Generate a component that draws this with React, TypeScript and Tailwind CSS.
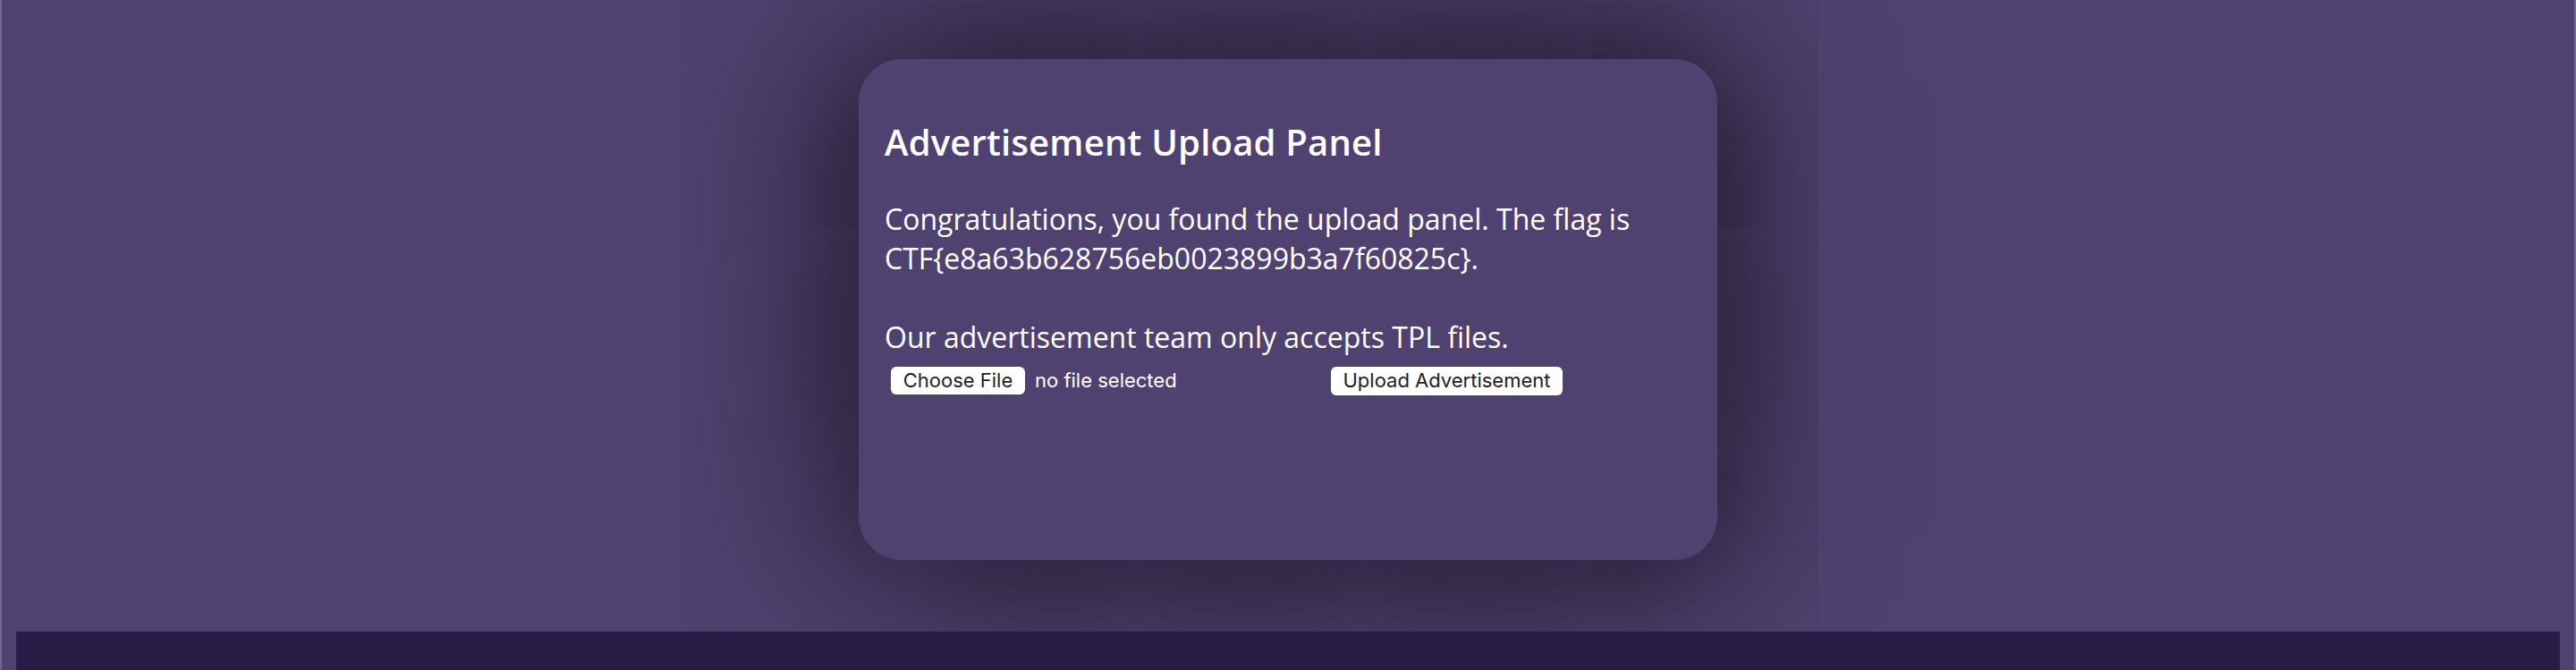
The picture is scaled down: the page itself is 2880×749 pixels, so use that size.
export default function App() {
  return (
    <div className="h-[749px] overflow-hidden bg-[#4f4270] border-x-2 border-[#70668f] flex flex-col items-center">
      <div className="mt-[66px] w-[960px] h-[560px] shrink-0 rounded-[48px] bg-[#4f4270] shadow-[0_0_210px_rgba(0,0,0,0.95)] pl-[29px] pt-[69px] text-white">
        <h2 className="font-['Open_Sans',sans-serif] text-[40px] leading-[48px] font-semibold tracking-[0.2px]">
          Advertisement Upload Panel
        </h2>
        <p className="mt-[40px] font-['Open_Sans',sans-serif] text-[32px] leading-[44px]">
          Congratulations, you found the upload panel. The flag is
          <br />
          CTF{"{"}e8a63b628756eb0023899b3a7f60825c{"}"}.
          <br />
          <br />
          Our advertisement team only accepts TPL files.
        </p>
        <form className="mt-[10px] ml-[7px] flex items-center font-['Inter',sans-serif] text-[22px]">
          <label className="h-[31px] w-[150px] flex items-center justify-center rounded-[6px] bg-white text-[#222]">
            Choose File
          </label>
          <span className="ml-[11px] w-[331px] text-white">no file selected</span>
          <button
            type="button"
            className="h-[32px] w-[259px] flex items-center justify-center rounded-[6px] bg-white text-[#222]"
          >
            Upload Advertisement
          </button>
        </form>
      </div>
      <div className="mt-[80px] h-[100px] w-[2844px] shrink-0 bg-[#261c45]" />
    </div>
  );
}
